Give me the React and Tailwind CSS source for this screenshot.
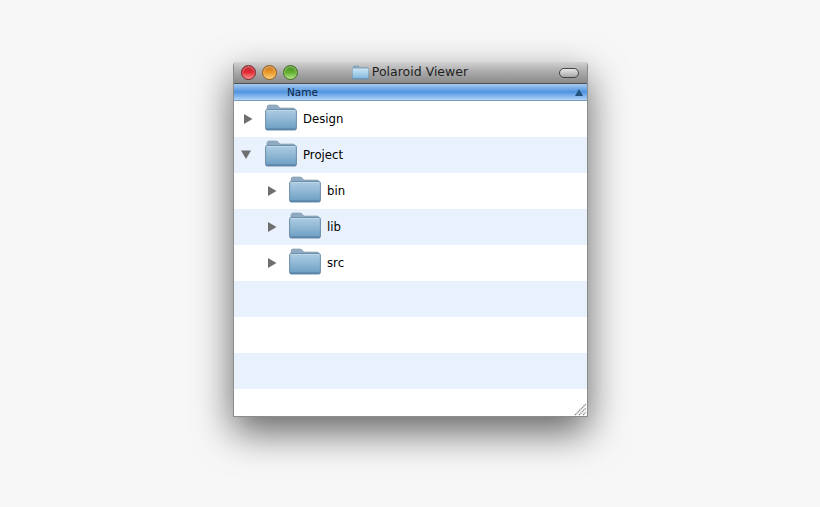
import React from 'react'

const rows = [
    { name: 'Design', depth: 0 },
    { name: 'Project', depth: 0, open: true },
    { name: 'bin', depth: 1 },
    { name: 'lib', depth: 1 },
    { name: 'src', depth: 1 },
    {},
    {},
    {},
]

const FolderIcon = ({ id, className, top = '#aecde3', mid = '#8eb6d3', bottom = '#6a9cc1' }) => (
    <svg viewBox="0 0 32 27" className={className}>
        <defs>
            <linearGradient id={id} x1="0" y1="0" x2="0" y2="1">
                <stop offset="0" stopColor={top} />
                <stop offset="0.5" stopColor={mid} />
                <stop offset="1" stopColor={bottom} />
            </linearGradient>
        </defs>
        <path d="M2 6 L2 3 Q2 1 4 1 L11 1 Q13 1 14 3 L15 4 L28 4 Q30 4 30 6 L30 8 L2 8 Z" fill="#8fabc1" stroke="#7d98ad" strokeWidth="0.6" />
        <rect x="0.6" y="5.5" width="30.8" height="20.5" rx="1.6" fill={`url(#${id})`} stroke="#5f84a0" strokeWidth="0.9" />
        <path d="M1.4 6.4 L30.6 6.4" stroke="#c4d8e6" strokeWidth="0.9" />
        <path d="M1.2 25 L30.8 25" stroke="#54799a" strokeWidth="0.9" />
    </svg>
)

const Arrow = ({ open }) => (
    <svg viewBox="0 0 12 12" className={open ? 'w-3 h-3 -ml-[2px]' : 'w-3 h-3'}>
        {open
            ? <path d="M1 1.5 L11 1.5 L6 10 Z" fill="#6f6f6f" />
            : <path d="M2 1 L10.5 6 L2 11 Z" fill="#6f6f6f" />}
    </svg>
)

const Light = ({ className }) => (
    <span className={`w-[15px] h-[15px] rounded-full border bg-gradient-to-b shadow-[inset_0_1px_2px_rgba(255,255,255,0.5)] ${className}`} />
)

export default function App() {
    return (
        <div className="w-[820px] h-[507px] bg-[#f7f7f7] overflow-hidden pt-[62px] pl-[233px] font-['DejaVu_Sans',sans-serif]">

            <div className="w-[355px] h-[355px] bg-white flex flex-col overflow-hidden rounded-t-[4px] border-x border-b border-[#8c8c8c] shadow-[0_15px_38px_rgba(0,0,0,0.6)]">

                {/* TITLE BAR */}
                <div className="h-[22px] shrink-0 flex items-center pl-[7px] pr-[8px] bg-gradient-to-b from-[#d2d2d2] via-[#a8a8a8] to-[#8a8a8a] border-b border-[#4f4f4f]">
                    <div className="flex items-center gap-[6px] w-[60px]">
                        <Light className="border-[#7a2226] from-[#b8242c] via-[#e52a34] to-[#f58a90]" />
                        <Light className="border-[#8f5f18] from-[#c8701a] via-[#eb9a28] to-[#fcd27a]" />
                        <Light className="border-[#3f6f20] from-[#3f8a1c] via-[#64b030] to-[#b4e484]" />
                    </div>
                    <div className="flex-1 flex items-center justify-center gap-[3px] pr-[40px]">
                        <FolderIcon id="titleFolder" top="#cfe6f6" mid="#a5cfea" bottom="#7fb4d8" className="w-[17px] h-[15px]" />
                        <span className="text-[12.5px] leading-none text-[#1f1f1f]">Polaroid Viewer</span>
                    </div>
                    <span className="w-[20px] h-[10px] rounded-full border border-[#444] bg-gradient-to-b from-[#e8e8e8] to-[#a8a8a8]" />
                </div>

                {/* COLUMN HEADER */}
                <div className="h-[17px] shrink-0 flex items-center justify-between pl-[53px] pr-[4px] bg-gradient-to-b from-[#a6cbef] via-[#4f93e0] to-[#b0d5f7] border-b border-[#7c9cba]">
                    <span className="text-[10.5px] leading-none text-[#0d2440]">Name</span>
                    <svg viewBox="0 0 8 7" className="w-2 h-[7px]">
                        <path d="M4 0 L8 7 L0 7 Z" fill="#23527f" />
                    </svg>
                </div>

                {/* ROWS */}
                <div className="flex-1 flex flex-col">
                    {rows.map((row, i) => (
                        <div
                            key={i}
                            className={`h-9 shrink-0 flex items-center ${i % 2 === 1 ? 'bg-[#e9f1fc]' : 'bg-white'}`}
                        >
                            {row.name && (
                                <div className={`flex items-center ${row.depth ? 'pl-[32px]' : 'pl-[8px]'}`}>
                                    <span className="w-3 h-3 flex mr-[11px]">
                                        <Arrow open={row.open} />
                                    </span>
                                    <FolderIcon id={`folder${i}`} className="w-8 h-[27px] mr-[6px] mb-[3px]" />
                                    <span className="text-[11.7px] leading-none text-black mt-[2px]">{row.name}</span>
                                </div>
                            )}
                        </div>
                    ))}
                </div>

                {/* RESIZE GRIP */}
                <div className="h-0 flex justify-end">
                    <svg viewBox="0 0 13 13" className="w-[13px] h-[13px] -mt-[13px] shrink-0">
                        <path d="M1 12 L12 1 M5 12 L12 5 M9 12 L12 9" stroke="#8a8a8a" strokeWidth="1.3" strokeDasharray="1.4 0.6" />
                    </svg>
                </div>

            </div>

        </div>
    )
}
